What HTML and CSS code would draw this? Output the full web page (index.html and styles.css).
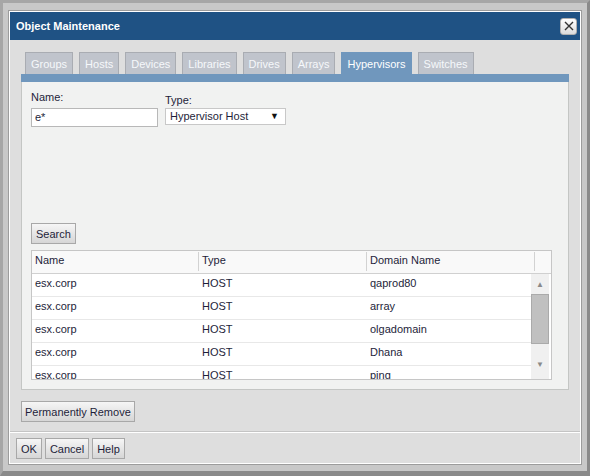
FILE: index.html
```html
<!DOCTYPE html>
<html lang="en">
<head>
  <meta charset="UTF-8" />
  <title>Object Maintenance</title>
  <link rel="stylesheet" href="styles.css">
</head>
<body>
  <div class="frame">
    <div class="dialog">
      <div class="inner">
        <div class="titlebar">
          <span class="title">Object Maintenance</span>
          <button class="close" title="Close">
            <svg width="10" height="10" viewBox="0 0 10 10"><path d="M1 1 L9 9 M9 1 L1 9" stroke="#333" stroke-width="1.4"/></svg>
          </button>
        </div>

        <div class="content">
          <div class="tabs">
            <div class="tab">Groups</div>
            <div class="tab">Hosts</div>
            <div class="tab">Devices</div>
            <div class="tab">Libraries</div>
            <div class="tab">Drives</div>
            <div class="tab">Arrays</div>
            <div class="tab active">Hypervisors</div>
            <div class="tab">Switches</div>
          </div>

          <div class="panel">
            <div class="panel-body">
              <div class="fields">
                <div class="field">
                  <label>Name:</label>
                  <div class="input">e*</div>
                </div>
                <div class="field field-type">
                  <label>Type:</label>
                  <div class="select">Hypervisor Host <span class="arrow">&#9660;</span></div>
                </div>
              </div>

              <button class="btn">Search</button>

              <div class="grid">
                <div class="grid-head">
                  <div class="col c1">Name</div>
                  <div class="col c2">Type</div>
                  <div class="col c3">Domain Name</div>
                  <div class="col c4"></div>
                </div>
                <div class="grid-body">
                  <div class="rows">
                    <div class="row"><div class="cell c1">esx.corp</div><div class="cell c2">HOST</div><div class="cell c3">qaprod80</div></div>
                    <div class="row"><div class="cell c1">esx.corp</div><div class="cell c2">HOST</div><div class="cell c3">array</div></div>
                    <div class="row"><div class="cell c1">esx.corp</div><div class="cell c2">HOST</div><div class="cell c3">olgadomain</div></div>
                    <div class="row"><div class="cell c1">esx.corp</div><div class="cell c2">HOST</div><div class="cell c3">Dhana</div></div>
                    <div class="row"><div class="cell c1">esx.corp</div><div class="cell c2">HOST</div><div class="cell c3">ping</div></div>
                  </div>
                  <div class="scrollbar">
                    <span class="sb-arrow">&#9650;</span>
                    <div class="sb-track"><div class="sb-thumb"></div></div>
                    <span class="sb-arrow">&#9660;</span>
                  </div>
                </div>
              </div>
            </div>
          </div>

          <button class="btn remove">Permanently Remove</button>
        </div>

        <div class="footer">
          <button class="btn">OK</button>
          <button class="btn">Cancel</button>
          <button class="btn">Help</button>
        </div>
      </div>
    </div>
  </div>
</body>
</html>
```

FILE: styles.css
```css
body {
  margin: 0;
  background: #8c8c8c;
  font-family: "Liberation Sans", Arial, sans-serif;
  font-size: 11px;
  color: #1e1e3a;
}

.frame {
  width: 590px;
  height: 476px;
  box-sizing: border-box;
  border-style: solid;
  border-width: 3px 3px 5px 3px;
  border-color: #a6a6a6 #8a8a8a #8a8a8a #a6a6a6;
  background: #c8c8c8;
  padding: 7px 5px 6px 5px;
}

.dialog {
  border: 1px solid #9c9c9c;
  padding: 1px;
  background: #fff;
  height: 100%;
  box-sizing: border-box;
}

.inner {
  background: #dedede;
  height: 100%;
  display: flex;
  flex-direction: column;
}

.titlebar {
  height: 28px;
  flex-shrink: 0;
  background: #1f5284;
  display: flex;
  align-items: center;
  justify-content: space-between;
  padding: 0 3px 0 6px;
}

.title {
  color: #fff;
  font-weight: bold;
  font-size: 11px;
}

.close {
  width: 17px;
  height: 17px;
  padding: 0;
  border: 1px solid #b0b0b0;
  border-radius: 3px;
  background: linear-gradient(#ffffff, #dcdcdc);
  display: flex;
  align-items: center;
  justify-content: center;
}

.content {
  padding: 12px 11px 0 11px;
  border-bottom: 1px solid #c4c4c4;
  height: 392px;
  flex-shrink: 0;
  box-sizing: border-box;
}

.tabs {
  display: flex;
  gap: 6px;
  padding-left: 4px;
}

.tab {
  height: 21px;
  line-height: 22px;
  padding: 0 5px;
  background: #c0c4cc;
  border: 1px solid #a9acb2;
  border-bottom: none;
  color: #f6f8fb;
}

.tab.active {
  background: #7097bd;
  border-color: #7097bd;
  color: #fff;
}

.panel {
  border-top: 8px solid #7097bd;
}

.panel-body {
  background: #f1f2f1;
  border: 1px solid #c4c6c4;
  border-top: none;
  height: 308px;
  box-sizing: border-box;
  padding: 9px 15px 11px 9px;
}

.fields {
  display: flex;
  gap: 7px;
  height: 132px;
}

.field label {
  display: block;
  height: 17px;
}

.field-type {
  padding-top: 3px;
}

.field-type label {
  height: 14px;
}

.input {
  line-height: 17px;
  border: 1px solid #b8b8b8;
  background: #fff;
  padding-left: 3px;
  box-sizing: border-box;
  width: 127px;
  height: 19px;
}

.select {
  width: 121px;
  height: 17px;
  line-height: 15px;
  box-sizing: border-box;
  border: 1px solid #c8c8c8;
  background: #fff;
  padding-left: 4px;
  display: flex;
  justify-content: space-between;
}

.arrow {
  font-size: 9px;
  color: #111;
  padding-right: 6px;
}

.btn {
  font-family: "Liberation Sans", Arial, sans-serif;
  font-size: 11px;
  color: #1e1e3a;
  height: 21px;
  padding: 0 4px;
  border: 1px solid #a8a8a8;
  background: linear-gradient(#f6f6f6, #d6d6d6);
  display: block;
}

.grid {
  margin-top: 6px;
  width: 519px;
  border: 1px solid #c6c6c6;
  background: #fff;
}

.grid-head {
  display: flex;
  height: 22px;
  background: #f9f9f9;
  border-bottom: 1px solid #d0d0d0;
}

.col {
  border-right: 1px solid #d2d2d2;
  padding-left: 3px;
  box-sizing: border-box;
  height: 19px;
  margin-top: 1px;
  line-height: 17px;
}

.col.c1 { width: 167px; }
.col.c2 { width: 168px; }
.col.c3 { width: 168px; }
.col.c4 { width: 16px; border-right: none; }

.grid-body {
  display: flex;
  height: 105px;
  overflow: hidden;
}

.rows {
  width: 499px;
}

.row {
  display: flex;
  height: 22px;
  line-height: 19px;
  border-bottom: 1px solid #e8e8e8;
}

.cell {
  padding-left: 3px;
  box-sizing: border-box;
}

.cell.c1 { width: 167px; }
.cell.c2 { width: 168px; }
.cell.c3 { width: 164px; }

.scrollbar {
  width: 18px;
  margin-right: 2px;
  background: #f0f0f0;
  display: flex;
  flex-direction: column;
  align-items: center;
}

.sb-arrow {
  font-size: 8px;
  color: #8a8a8a;
  height: 12px;
  line-height: 12px;
  margin-top: 5px;
}

.sb-arrow:last-child {
  margin-top: 0;
  margin-bottom: 8px;
}

.sb-track {
  flex: 1;
  width: 100%;
}

.sb-thumb {
  height: 50px;
  background: #c0c0c0;
  border: 1px solid #aaaaaa;
  margin-top: 3px;
  box-sizing: border-box;
}

.remove {
  margin-top: 11px;
  padding: 0 3px;
}

.footer {
  border-top: 1px solid #fff;
  display: flex;
  gap: 3px;
  padding: 5px 0 0 6px;
}
```
